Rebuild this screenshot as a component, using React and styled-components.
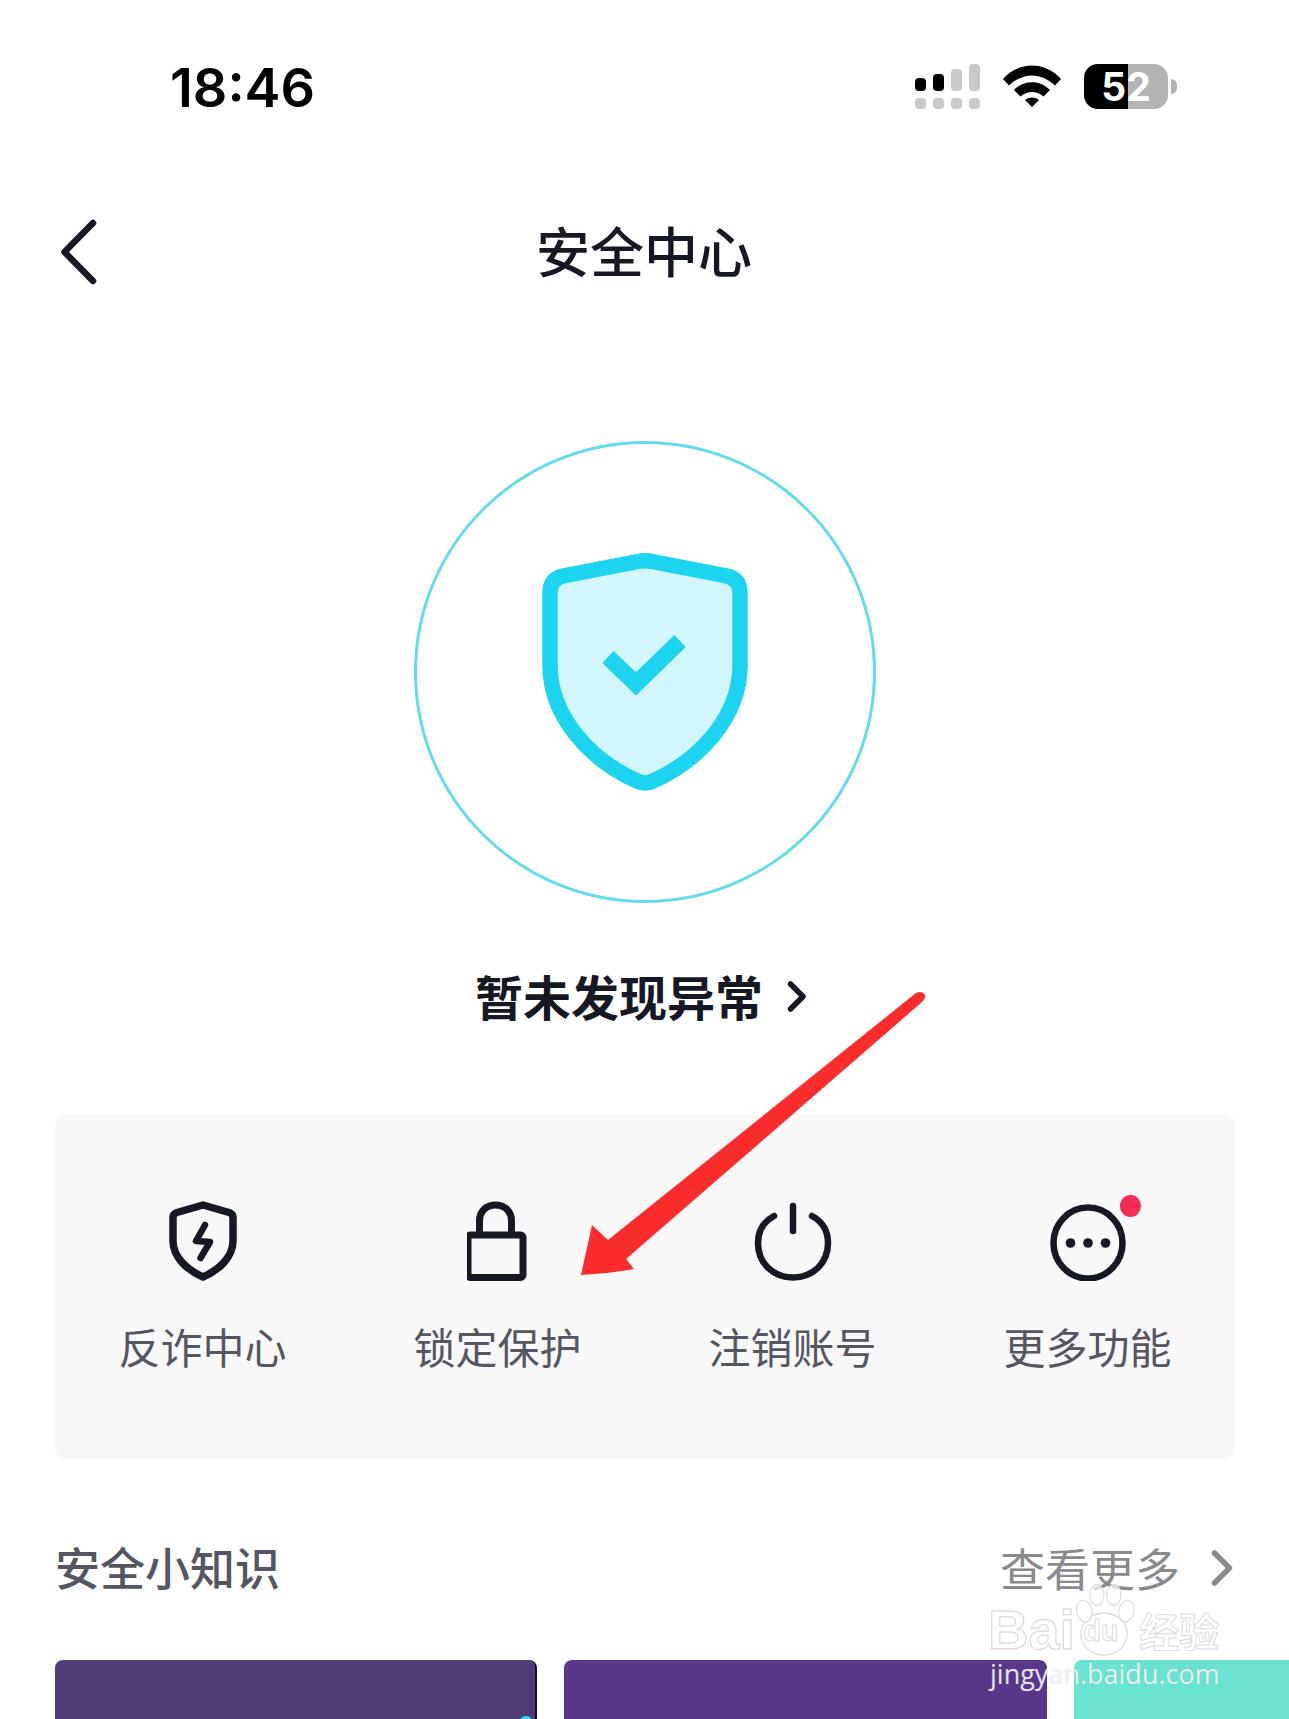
import React from "react";
import styled, { createGlobalStyle } from "styled-components";

const cjk = `"Noto Sans CJK SC", "Noto Sans", sans-serif`;

const Global = createGlobalStyle`
  html, body { margin: 0; padding: 0; background: #fff; }
  * { box-sizing: border-box; }
`;

const Page = styled.div`
  position: relative;
  width: 1289px;
  height: 1719px;
  overflow: hidden;
  background: #fff;
  font-family: ${cjk};
  color: #161823;
`;

const StatusBar = styled.div`
  display: flex;
  justify-content: space-between;
  align-items: flex-start;
  height: 174px;
  padding: 64px 122px 0 170px;
`;

const Time = styled.div`
  font-family: Inter, "Liberation Sans", sans-serif;
  font-size: 54px;
  font-weight: 600;
  line-height: 45px;
  padding-top: 1px;
  color: #000;
`;

const Indicators = styled.div`
  display: flex;
  align-items: flex-start;
  gap: 23px;
`;

const Battery = styled.div`
  position: relative;
  width: 84px;
  height: 45px;
  margin-right: -1px;
  border-radius: 14px;
  background: linear-gradient(90deg, #000 0 52%, #b3b3b3 52% 100%);
  display: flex;
  align-items: center;
  justify-content: center;
  font-family: Inter, "Liberation Sans", sans-serif;
  font-size: 39px;
  font-weight: 700;
  color: #fff;
  &::after {
    content: "";
    position: absolute;
    right: -9px;
    top: 15px;
    width: 6px;
    height: 15px;
    background: #b3b3b3;
    border-radius: 0 8px 8px 0;
  }
`;

const NavBar = styled.div`
  position: relative;
  height: 156px;
  display: flex;
  align-items: center;
  justify-content: center;
`;

const BackIcon = styled.svg`
  position: absolute;
  left: 60px;
  top: 44px;
  width: 38px;
  height: 68px;
`;

const Title = styled.h1`
  margin: -4px 0 0 -1px;
  font-size: 54px;
  font-weight: 500;
  line-height: 60px;
  color: #161823;
`;

const Hero = styled.div`
  display: flex;
  justify-content: center;
  padding: 111px 0 0 0;
`;

const Ring = styled.div`
  width: 462px;
  height: 462px;
  border-radius: 50%;
  border: 3px solid #62dcec;
  display: flex;
  align-items: center;
  justify-content: center;
`;

const BigShield = styled.svg`
  width: 206px;
  height: 238px;
`;

const Verdict = styled.div`
  display: flex;
  justify-content: center;
  align-items: center;
  gap: 24px;
  height: 50px;
  margin-top: 70px;
  padding-right: 7px;
  font-size: 48px;
  font-weight: 700;
  color: #161823;
`;

const VerdictText = styled.span`
  position: relative;
  top: -3px;
`;

const VerdictChevron = styled.svg`
  width: 20px;
  height: 33px;
  position: relative;
  top: -2px;
`;

const Panel = styled.div`
  display: grid;
  grid-template-columns: repeat(4, 1fr);
  height: 345px;
  margin: 91px 54px 0 55px;
  padding-top: 87px;
  background: #f8f8f9;
  border-radius: 10px;
`;

const Action = styled.div`
  display: flex;
  flex-direction: column;
  align-items: center;
`;

const IconBox = styled.div`
  position: relative;
  height: 80px;
  display: flex;
  align-items: center;
  justify-content: center;
`;

const ActionIcon = styled.svg`
  display: block;
  width: ${(p) => p.$w}px;
  height: 80px;
`;

const Dot = styled.span`
  position: absolute;
  top: -6px;
  right: -15px;
  width: 21px;
  height: 22px;
  border-radius: 50%;
  background: #f22c54;
`;

const ActionLabel = styled.div`
  margin-top: 40px;
  font-size: 42px;
  line-height: 50px;
  color: #55565f;
`;

const SectionHead = styled.div`
  display: flex;
  justify-content: space-between;
  align-items: center;
  height: 60px;
  margin: 80px 56px 0 55px;
`;

const SectionTitle = styled.h2`
  margin: -4px 0 0;
  font-size: 45px;
  font-weight: 500;
  line-height: 60px;
  color: #55565f;
`;

const More = styled.div`
  display: flex;
  align-items: center;
  gap: 31px;
  margin-top: -3px;
  font-size: 45px;
  line-height: 60px;
  color: #8a8a8e;
`;

const MoreChevron = styled.svg`
  width: 22px;
  height: 38px;
`;

const Cards = styled.div`
  display: flex;
  gap: 27px;
  margin: 61px 0 0 55px;
`;

const Card = styled.div`
  position: relative;
  flex: none;
  width: ${(p) => p.$w}px;
  height: 200px;
  border-radius: 8px;
  background: ${(p) => p.$bg};
  border-right: ${(p) => (p.$edge ? "2px solid #14102a" : "none")};
`;

const CardDot = styled.span`
  position: absolute;
  right: 2px;
  top: 56px;
  width: 14px;
  height: 14px;
  border-radius: 50%;
  background: #1fe3f0;
`;

const ArrowMark = styled.svg`
  position: absolute;
  left: 578px;
  top: 988px;
  width: 352px;
  height: 290px;
`;

const Watermark = styled.div`
  position: absolute;
  left: 988px;
  top: 1584px;
  width: 240px;
  height: 108px;
`;

const MarkRow = styled.div`
  display: flex;
  align-items: flex-end;
  height: 72px;
  white-space: nowrap;
`;

const MarkLatin = styled.span`
  font-family: "Liberation Sans", sans-serif;
  font-size: 56px;
  line-height: 52px;
  font-weight: 700;
  color: rgba(255, 255, 255, 0.7);
  -webkit-text-stroke: 1.3px #dcdcdc;
`;

const Paw = styled.div`
  position: relative;
  width: 68px;
  height: 72px;
  flex: none;
  margin-left: -5px;
`;

const PawSvg = styled.svg`
  display: block;
  width: 68px;
  height: 72px;
`;

const PawText = styled.span`
  position: absolute;
  left: 13px;
  bottom: 9px;
  font-family: "Liberation Sans", sans-serif;
  font-size: 29px;
  line-height: 32px;
  font-weight: 700;
  color: rgba(255, 255, 255, 0.7);
  -webkit-text-stroke: 1px #dcdcdc;
`;

const MarkCjk = styled.span`
  flex: none;
  font-family: ${cjk};
  font-size: 40px;
  line-height: 52px;
  margin-left: 1px;
  font-weight: 700;
  color: rgba(255, 255, 255, 0.7);
  -webkit-text-stroke: 1px #dcdcdc;
`;

const MarkUrl = styled.div`
  padding-left: 2px;
  font-family: "Open Sans", sans-serif;
  font-size: 27px;
  line-height: 36px;
  color: rgba(255, 255, 255, 0.82);
  text-shadow: 0 0 1px rgba(150, 150, 150, 0.55);
  white-space: nowrap;
`;

const SignalIcon = () => (
  <svg width="65" height="45" viewBox="0 0 65 45">
    <rect x="0" y="14" width="11" height="13" rx="4" fill="#000" />
    <rect x="18" y="10" width="11" height="17" rx="4" fill="#000" />
    <rect x="36" y="5" width="11" height="22" rx="4" fill="#c9c9c9" />
    <rect x="54" y="0" width="11" height="27" rx="4" fill="#c9c9c9" />
    {[0, 18, 36, 54].map((x) => (
      <rect key={x} x={x} y="34" width="11" height="11" rx="4" fill="#c9c9c9" />
    ))}
  </svg>
);

const WifiIcon = () => (
  <svg width="58" height="43" viewBox="0 0 58 43">
    <g fill="#000">
      <path d="M0 15 C16 -3 42 -3 58 15 L52 21.5 C38 8 20 8 6 21.5Z" />
      <path d="M11 26 C21 15.5 37 15.5 47 26 L40.5 32.5 C34 26.5 24 26.5 17.5 32.5Z" />
      <path d="M22 36 C25 32.5 33 32.5 36 36 L29 43Z" />
    </g>
  </svg>
);

const Chevron = ({ as: Comp, d, vb, sw, color }) => (
  <Comp viewBox={vb}>
    <path d={d} fill="none" stroke={color} strokeWidth={sw} strokeLinecap="round" strokeLinejoin="round" />
  </Comp>
);

const ink = "#161823";

const actions = [
  {
    label: "反诈中心",
    w: 68,
    vb: "0 0 68 80",
    icon: (
      <>
        <path
          d="M34 4 L60 11.500 Q64 13 64 16 V40 C64 56 50 69 34 76 C18 69 4 56 4 40 V16 Q4 13 8 11.500 Z"
          fill="none" stroke={ink} strokeWidth="7.500" strokeLinejoin="round"
        />
        <path d="M36 24 L27 40 L41 41 L31.500 57" fill="none" stroke={ink} strokeWidth="6.500" strokeLinecap="round" strokeLinejoin="round" />
      </>
    ),
  },
  {
    label: "锁定保护",
    w: 62,
    vb: "2.500 0 62 80",
    icon: (
      <>
        <rect x="3.500" y="34" width="55" height="42.500" rx="2.500" fill="none" stroke={ink} strokeWidth="7" />
        <path d="M15 34 V20 C15 -1.500 47 -1.500 47 20 V34" fill="none" stroke={ink} strokeWidth="7" />
      </>
    ),
  },
  {
    label: "注销账号",
    w: 78,
    vb: "0 0 78 80",
    icon: (
      <>
        <path d="M20 15 C9 21 4 31 4 42 C4 62 19 76.500 39 76.500 C59 76.500 74 62 74 42 C74 31 69 21 58 15" fill="none" stroke={ink} strokeWidth="6.500" strokeLinecap="round" />
        <path d="M39 5 V30" fill="none" stroke={ink} strokeWidth="6.500" strokeLinecap="round" />
      </>
    ),
  },
  {
    label: "更多功能",
    w: 76,
    vb: "0 0 76 80",
    dot: true,
    icon: (
      <>
        <ellipse cx="38" cy="42" rx="34.500" ry="35.500" fill="none" stroke={ink} strokeWidth="6.500" />
        <circle cx="20.500" cy="42" r="4.800" fill={ink} />
        <circle cx="38" cy="42" r="4.800" fill={ink} />
        <circle cx="55.500" cy="42" r="4.800" fill={ink} />
      </>
    ),
  },
];

export default function App() {
  return (
    <Page>
      <Global />
      <StatusBar>
        <Time>18:46</Time>
        <Indicators>
          <SignalIcon />
          <WifiIcon />
          <Battery>52</Battery>
        </Indicators>
      </StatusBar>

      <NavBar>
        <Chevron as={BackIcon} vb="0 0 38 68" d="M33 5 L4.500 34 L33 63" sw="6.500" color={ink} />
        <Title>安全中心</Title>
      </NavBar>

      <Hero>
        <Ring>
          <BigShield viewBox="0 0 206 238">
            <path
              d="M96 8.500 L21 23 Q8 26 8 40 V112 C8 165 50 208 95 228 Q103 232 111 228 C156 208 198 165 198 112 V40 Q198 26 185 23 L110 8.500 Q103 7 96 8.500 Z"
              fill="#d2f6fb" stroke="#1dd4f0" strokeWidth="15.500" strokeLinejoin="round"
            />
            <path d="M66 104 L94 131 L138 88" fill="none" stroke="#1dd4f0" strokeWidth="16.500" />
          </BigShield>
        </Ring>
      </Hero>

      <Verdict>
        <VerdictText>暂未发现异常</VerdictText>
        <Chevron as={VerdictChevron} vb="0 0 20 33" d="M3.500 4 L16 16.500 L3.500 29" sw="5.500" color={ink} />
      </Verdict>

      <Panel>
        {actions.map((a) => (
          <Action key={a.label}>
            <IconBox>
              <ActionIcon $w={a.w} viewBox={a.vb}>{a.icon}</ActionIcon>
              {a.dot && <Dot />}
            </IconBox>
            <ActionLabel>{a.label}</ActionLabel>
          </Action>
        ))}
      </Panel>

      <SectionHead>
        <SectionTitle>安全小知识</SectionTitle>
        <More>
          <span>查看更多</span>
          <Chevron as={MoreChevron} vb="0 0 22 38" d="M3.500 4 L18.500 19 L3.500 34" sw="5.500" color="#8a8a8e" />
        </More>
      </SectionHead>

      <Cards>
        <Card $w={482} $bg="#513c7a" $edge><CardDot /></Card>
        <Card $w={483} $bg="#58378a" />
        <Card $w={300} $bg="#6ae4d0" />
      </Cards>

      <ArrowMark viewBox="0 0 352 290">
        <path
          d="M3 287 L14 237 L30 252 L338 5 Q344 2 347 7 Q348 11 344 14 L48 271 L56 281 Q30 286 3 287 Z"
          fill="#fb2c2c"
        />
      </ArrowMark>

      <Watermark>
        <MarkRow>
          <MarkLatin>Bai</MarkLatin>
          <Paw>
            <PawSvg viewBox="0 0 76 72" preserveAspectRatio="none">
              <g fill="rgba(255,255,255,0.7)" stroke="#dcdcdc" strokeWidth="1.300">
                <ellipse cx="38" cy="50" rx="26" ry="21" />
                <ellipse cx="16" cy="27" rx="8.500" ry="11" transform="rotate(-18 16 27)" />
                <ellipse cx="30" cy="11" rx="8" ry="10.500" />
                <ellipse cx="49" cy="11" rx="8" ry="10.500" />
                <ellipse cx="63" cy="27" rx="8.500" ry="11" transform="rotate(18 63 27)" />
              </g>
            </PawSvg>
            <PawText>du</PawText>
          </Paw>
          <MarkCjk>经验</MarkCjk>
        </MarkRow>
        <MarkUrl>jingyan.baidu.com</MarkUrl>
      </Watermark>
    </Page>
  );
}
